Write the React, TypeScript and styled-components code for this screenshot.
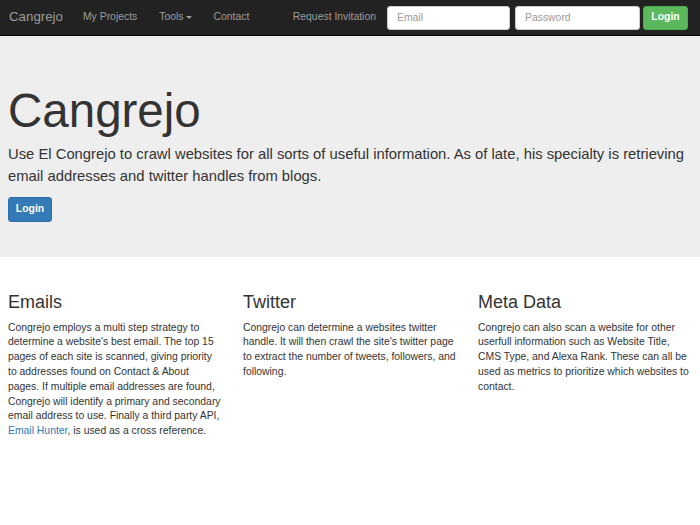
import React from "react";
import styled, { createGlobalStyle } from "styled-components";

const Global = createGlobalStyle`
  html, body { margin: 0; padding: 0; background: #fff; }
  body {
    font-family: "Liberation Sans", Arial, Helvetica, sans-serif;
    color: #333;
    font-size: 10.4px;
    line-height: 14.8px;
  }
  * { box-sizing: border-box; }
`;

const Navbar = styled.nav`
  height: 36px;
  background: #222;
  border-bottom: 1px solid #080808;
  display: flex;
  align-items: center;
  padding: 0 12px 0 9px;
`;

const Brand = styled.a`
  color: #9d9d9d;
  font-size: 13.3px;
  text-decoration: none;
  padding-right: 9px;
`;

const NavList = styled.ul`
  display: flex;
  list-style: none;
  margin: 0;
  padding: 0;
  flex: 1;
`;

const NavLink = styled.a`
  display: flex;
  align-items: center;
  color: #9d9d9d;
  font-size: 10.4px;
  text-decoration: none;
  padding: 0 11px;
`;

const Caret = styled.span`
  display: inline-block;
  width: 0;
  height: 0;
  margin-left: 2px;
  border-top: 3px solid #9d9d9d;
  border-left: 3px solid transparent;
  border-right: 3px solid transparent;
`;

const NavForm = styled.form`
  display: flex;
  align-items: center;
  margin: 0;
`;

const Input = styled.input<{ $w: number; $gap: number }>`
  width: ${(p) => p.$w}px;
  height: 24px;
  border: 1px solid #ccc;
  border-radius: 3px;
  background: #fff;
  font-family: inherit;
  font-size: 10.4px;
  color: #555;
  padding: 0 9px;
  margin-right: ${(p) => p.$gap}px;
  &::placeholder { color: #999; }
`;

const Button = styled.button<{ $variant: "success" | "primary" }>`
  font-family: inherit;
  font-size: 10.4px;
  font-weight: bold;
  color: #fff;
  line-height: 14.8px;
  padding: 4px 8px;
  border-radius: 3px;
  border: 1px solid
    ${(p) => (p.$variant === "success" ? "#4cae4c" : "#2e6da4")};
  background: ${(p) => (p.$variant === "success" ? "#5cb85c" : "#337ab7")};
  cursor: pointer;
`;

const NavButton = styled(Button)`
  height: 24px;
  width: 45px;
  padding: 0;
`;

const Jumbotron = styled.header`
  background: #eee;
  padding: 37px 8px 35px;
  margin-bottom: 22px;
`;

const HeroTitle = styled.h1`
  font-size: 47.5px;
  font-weight: 500;
  line-height: 1.1;
  margin: 12px 0 7px;
  color: #333;
`;

const Lead = styled.p`
  font-size: 14.8px;
  line-height: 21.7px;
  font-weight: 300;
  margin: 0 0 9px;
`;

const HeroButton = styled(Button)`
  height: 25px;
  width: 44px;
  padding: 0;
`;

const Features = styled.section`
  display: grid;
  grid-template-columns: repeat(3, 213px);
  column-gap: 22px;
  padding: 0 8px;
`;

const Feature = styled.div``;

const FeatureTitle = styled.h3`
  font-size: 18px;
  font-weight: 500;
  line-height: 1.1;
  margin: 14.8px 0 7.4px;
  color: #333;
`;

const Text = styled.p`
  margin: 0 0 7.4px;
`;

const Link = styled.a`
  color: #337ab7;
  text-decoration: none;
`;

export default function App() {
  return (
    <>
      <Global />
      <Navbar>
        <Brand href="#">Cangrejo</Brand>
        <NavList>
          <li><NavLink href="#">My Projects</NavLink></li>
          <li><NavLink href="#">Tools<Caret /></NavLink></li>
          <li><NavLink href="#">Contact</NavLink></li>
        </NavList>
        <NavLink href="#">Request Invitation</NavLink>
        <NavForm onSubmit={(e) => e.preventDefault()}>
          <Input $w={123} $gap={5} type="text" placeholder="Email" />
          <Input $w={125} $gap={3} type="password" placeholder="Password" />
          <NavButton $variant="success" type="submit">Login</NavButton>
        </NavForm>
      </Navbar>
      <Jumbotron>
        <HeroTitle>Cangrejo</HeroTitle>
        <Lead>
          Use El Congrejo to crawl websites for all sorts of useful information. As of late, his
          specialty is retrieving email addresses and twitter handles from blogs.
        </Lead>
        <HeroButton $variant="primary">Login</HeroButton>
      </Jumbotron>
      <Features>
        <Feature>
          <FeatureTitle>Emails</FeatureTitle>
          <Text>
            Congrejo employs a multi step strategy to determine a website's best email. The top 15
            pages of each site is scanned, giving priority to addresses found on Contact &amp; About
            pages. If multiple email addresses are found, Congrejo will identify a primary and
            secondary email address to use. Finally a third party API,{" "}
            <Link href="#">Email Hunter</Link>, is used as a cross reference.
          </Text>
        </Feature>
        <Feature>
          <FeatureTitle>Twitter</FeatureTitle>
          <Text>
            Congrejo can determine a websites twitter handle. It will then crawl the site's twitter
            page to extract the number of tweets, followers, and following.
          </Text>
        </Feature>
        <Feature>
          <FeatureTitle>Meta Data</FeatureTitle>
          <Text>
            Congrejo can also scan a website for other userfull information such as Website Title,
            CMS Type, and Alexa Rank. These can all be used as metrics to prioritize which websites
            to contact.
          </Text>
        </Feature>
      </Features>
    </>
  );
}
